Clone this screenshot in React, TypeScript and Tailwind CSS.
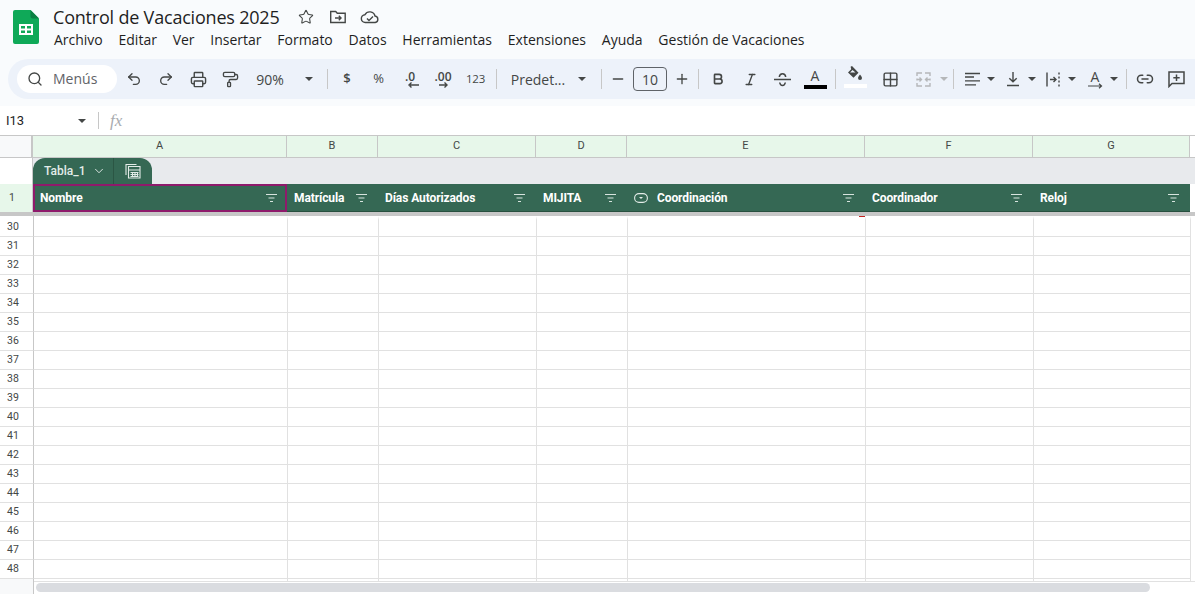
import { Printer, PaintRoller, Undo2, Redo2, Search, Star, Link2, Plus, Minus, ChevronDown, Bold, Italic, Grid2x2 } from 'lucide-react';
import type { ReactNode } from 'react';

const menus = ['Archivo', 'Editar', 'Ver', 'Insertar', 'Formato', 'Datos', 'Herramientas', 'Extensiones', 'Ayuda', 'Gestión de Vacaciones'];
const rows = Array.from({ length: 20 }, (_, i) => 30 + i);

const columns = [
  { key: 'A', title: 'Nombre', width: 'w-[254px]' },
  { key: 'B', title: 'Matrícula', width: 'w-[91px]' },
  { key: 'C', title: 'Días Autorizados', width: 'w-[158px]' },
  { key: 'D', title: 'MIJITA', width: 'w-[91px]' },
  { key: 'E', title: 'Coordinación', width: 'w-[238px]' },
  { key: 'F', title: 'Coordinador', width: 'w-[168px]' },
  { key: 'G', title: 'Reloj', width: 'w-[157px]' },
];

const Btn = ({ w, children }: { w: string; children: ReactNode }) => (
  <div className={`${w} h-full flex-none flex items-center justify-center text-[#444746]`}>{children}</div>
);

const Sep = () => (
  <div className="w-[8px] h-full flex-none flex items-center justify-center">
    <div className="w-px h-[20px] bg-[#c7c7c7]" />
  </div>
);

const Caret = ({ w = 'w-[10px]', light = false }: { w?: string; light?: boolean }) => (
  <div className={`${w} h-full flex-none flex items-center justify-center`}>
    <div className={`w-0 h-0 border-x-[4px] border-x-transparent border-t-[4px] ${light ? 'border-t-[#b5b7b9]' : 'border-t-[#444746]'}`} />
  </div>
);

const FilterIcon = () => (
  <svg width="11" height="8" viewBox="0 0 11 8" className="flex-none">
    <path d="M0 .5h11M2.500 4h6M4 7.500h3" stroke="#d7e4de" strokeWidth="1" fill="none" />
  </svg>
);

const SheetsLogo = () => (
  <svg width="26" height="34" viewBox="0 0 26 34" className="flex-none">
    <path d="M2 0h15.500L26 8.500V32a2 2 0 0 1-2 2H2a2 2 0 0 1-2-2V2a2 2 0 0 1 2-2z" fill="#0fa958" />
    <path d="M17.500 0 26 8.500h-6.500a2 2 0 0 1-2-2z" fill="#0b7f43" />
    <path d="M6 14h14v11H6z" fill="#fff" />
    <path d="M8 16h4v2.500H8zM14 16h4v2.500h-4zM8 20.500h4V23H8zM14 20.500h4V23h-4z" fill="#0fa958" />
  </svg>
);

const Header = () => (
  <div className="h-[59px] flex pl-[13px] pt-[10px] bg-[#f9fbfd]">
    <SheetsLogo />
    <div className="ml-[14px] -mt-[5px]">
      <div className="flex items-center h-[24px]">
        <span className="text-[18px] leading-[24px] text-[#1f1f1f] w-[245px] font-['Open_Sans',sans-serif] tracking-[-0.2px]">Control de Vacaciones 2025</span>
        <Star size={16} strokeWidth={1.6} className="text-[#444746]" />
        <svg width="18" height="16" viewBox="0 0 18 16" fill="none" stroke="#444746" strokeWidth="1.4" className="ml-[15px]">
          <path d="M1.700 2.500h5l1.600 1.800h7.900v9.200H1.700z" />
          <path d="M6 9h6M9.800 6.800 12 9l-2.200 2.200" />
        </svg>
        <svg width="20" height="16" viewBox="0 0 20 16" fill="none" stroke="#444746" strokeWidth="1.4" className="ml-[13px]">
          <path d="M5.500 13.500a3.900 3.900 0 0 1-.5-7.800 5.400 5.400 0 0 1 10 1.300 3.300 3.300 0 0 1 .2 6.500z" />
          <path d="m7 9.500 2 2 4-4" />
        </svg>
      </div>
      <div className="flex gap-[15.8px] mt-[1px] ml-[1px] text-[14px] leading-[19px] text-[#1f1f1f] font-['Open_Sans',sans-serif] tracking-[-0.01px]">
        {menus.map((m) => (
          <span key={m} className="whitespace-nowrap">{m}</span>
        ))}
      </div>
    </div>
  </div>
);

const Toolbar = () => (
  <div className="ml-[8px] h-[40px] flex items-center rounded-l-[20px] bg-[#edf2fa] pl-[9px] whitespace-nowrap font-['Open_Sans',sans-serif] text-[#444746]">
    <div className="w-[100px] h-[28px] flex-none rounded-full bg-white flex items-center pl-[10px] text-[14px]">
      <Search size={16} strokeWidth={2} />
      <span className="ml-[10px] pb-[2px] text-[#5f6368]">Menús</span>
    </div>
    <div className="w-[1px] flex-none" />
    <Btn w="w-[32px]"><Undo2 size={16} strokeWidth={2} /></Btn>
    <Btn w="w-[32px]"><Redo2 size={16} strokeWidth={2} /></Btn>
    <Btn w="w-[32px]"><Printer size={17} strokeWidth={2} /></Btn>
    <Btn w="w-[32px]"><PaintRoller size={17} strokeWidth={1.9} /></Btn>
    <Btn w="w-[48px]"><span className="text-[14px]">90%</span></Btn>
    <Caret w="w-[29px]" />
    <Sep />
    <Btn w="w-[32px]"><span className="text-[13px] font-semibold">$</span></Btn>
    <Btn w="w-[31px]"><span className="text-[13px]">%</span></Btn>
    <Btn w="w-[32px]">
      <div className="flex flex-col items-center">
        <span className="text-[12px] leading-[11px] font-semibold">.0</span>
        <svg width="12" height="6" viewBox="0 0 12 6" className="ml-[6px]"><path d="M12 3H3M4.500.5 2 3l2.500 2.500" stroke="#444746" strokeWidth="1.4" fill="none" /></svg>
      </div>
    </Btn>
    <div className="w-[1px] flex-none" />
    <Btn w="w-[32px]">
      <div className="flex flex-col items-center">
        <span className="text-[12px] leading-[11px] font-semibold">.00</span>
        <svg width="12" height="6" viewBox="0 0 12 6"><path d="M2 3h8M7.500.5 10 3 7.500 5.500" stroke="#444746" strokeWidth="1.4" fill="none" /></svg>
      </div>
    </Btn>
    <Btn w="w-[33px]"><span className="text-[11.5px] tracking-[-0.3px]">123</span></Btn>
    <Sep />
    <div className="w-[2px] flex-none" />
    <Btn w="w-[72px]"><span className="text-[14px]">Predet...</span></Btn>
    <Caret w="w-[16px]" />
    <div className="w-[7px] flex-none" />
    <Sep />
    <Btn w="w-[26px]"><Minus size={16} strokeWidth={2} /></Btn>
    <div className="w-[34px] h-[24px] ml-[2px] flex-none rounded-[4px] border border-[#5f6368] flex items-center justify-center text-[14px]">10</div>
    <div className="w-[2px] flex-none" />
    <Btn w="w-[25px]"><Plus size={16} strokeWidth={2} /></Btn>
    <Sep />
    <Btn w="w-[32px]"><Bold size={14} strokeWidth={2.8} /></Btn>
    <Btn w="w-[32px]"><Italic size={15} strokeWidth={2.2} /></Btn>
    <Btn w="w-[32px]">
      <svg width="17" height="15" viewBox="0 0 17 15" fill="none" stroke="#444746" strokeWidth="1.5">
        <path d="M0 7.500h17M5.300 5c.2-2 1.500-3.300 3.200-3.300S11.500 3 11.700 5M5.700 10.500c.3 1.800 1.300 3 2.800 3s2.500-1.200 2.800-3" />
      </svg>
    </Btn>
    <div className="w-[32px] h-full flex-none flex flex-col items-center pt-[8px] ml-[1px]">
      <span className="text-[14px] leading-[18px] font-medium">A</span>
      <div className="w-[23px] h-[4px] bg-black" />
    </div>
    <Sep />
    <div className="w-[32px] h-full flex-none flex flex-col items-center pt-[7px]">
      <svg width="16" height="18" viewBox="0 0 16 18" fill="#444746">
        <path d="M3.600.8 5 0l6.500 6.800-5 5L1 6.500l3.200-3.300zM5.500 4 3 6.500h5.500z" fillRule="evenodd" />
        <path d="M13 8.500s2 2.300 2 3.600a2 2 0 0 1-4 0c0-1.300 2-3.600 2-3.600z" />
      </svg>
      <div className="w-[23px] h-[4px] bg-white" />
    </div>
    <div className="w-[3px] flex-none" />
    <Btn w="w-[32px]"><Grid2x2 size={17} strokeWidth={2} /></Btn>
    <div className="w-[1px] flex-none" />
    <Btn w="w-[32px]">
      <svg width="15" height="15" viewBox="0 0 15 15" fill="none" stroke="#b5b7b9" strokeWidth="1.4">
        <path d="M1 4V1h5M14 4V1H9M1 11v3h5M14 11v3H9M1 6.500v2M14 6.500v2M5 7.500H1.500M10 7.500h3.500M3.500 5.500l2 2-2 2M11.500 5.500l-2 2 2 2" />
      </svg>
    </Btn>
    <Caret light />
    <Sep />
    <Btn w="w-[30px]">
      <svg width="15" height="15" viewBox="0 0 15 15" stroke="#444746" strokeWidth="1.3"><path d="M0 1.500h15M0 5h9M0 8.800h15M0 12.800h11" /></svg>
    </Btn>
    <Caret w="w-[8px]" />
    <div className="w-[4px] flex-none" />
    <Btn w="w-[28px]">
      <svg width="14" height="15" viewBox="0 0 14 15" fill="none" stroke="#444746" strokeWidth="1.4"><path d="M7 0v9.500M3.300 6.200 7 9.800l3.700-3.600M1 13.500h12" /></svg>
    </Btn>
    <Caret />
    <div className="w-[2px] flex-none" />
    <Btn w="w-[28px]">
      <svg width="14" height="15" viewBox="0 0 14 15" fill="none" stroke="#444746" strokeWidth="1.4">
        <path d="M1 .5v14M4 7.500h6M7.500 5l2.500 2.500L7.500 10" />
        <path d="M13 .5v14" strokeDasharray="2 2" />
      </svg>
    </Btn>
    <Caret />
    <div className="w-[4px] flex-none" />
    <Btn w="w-[28px]">
      <div className="flex flex-col items-center">
        <span className="text-[14px] leading-[13px] font-medium">A</span>
        <svg width="15" height="6" viewBox="0 0 15 6" fill="none" stroke="#444746" strokeWidth="1.2"><path d="M0 3h13.500M11 .8 13.500 3 11 5.200" /></svg>
      </div>
    </Btn>
    <Caret />
    <div className="w-[3px] flex-none" />
    <Sep />
    <Btn w="w-[30px]"><Link2 size={18} strokeWidth={2} /></Btn>
    <Btn w="w-[32px]">
      <svg width="17" height="17" viewBox="0 0 17 17" fill="none" stroke="#444746" strokeWidth="1.5">
        <path d="M1 1h15v11.500H4L1 15.500zM8.500 3.500v6.500M5.300 6.800h6.400" />
      </svg>
    </Btn>
  </div>
);

const FormulaBar = () => (
  <div className="h-[29px] mt-[7px] flex items-center bg-white font-['Roboto',sans-serif]">
    <span className="w-[72px] pl-[6px] pt-[1px] text-[13px] text-[#1f1f1f] flex-none">I13</span>
    <Caret w="w-[20px]" />
    <div className="w-px h-[17px] bg-[#c7c7c7] ml-[6px]" />
    <span className="ml-[11px] pt-[1px] text-[17px] italic text-[#a8abaf] font-['Liberation_Serif',serif]">fx</span>
  </div>
);

const ColumnHeaders = () => (
  <div className="h-[23px] flex border-y border-[#c7c7c7] bg-[#e7f7ea]">
    <div className="w-[33px] flex-none bg-[#f8f9fa] border-r-[2px] border-[#c7c7c7]" />
    {columns.map((c) => (
      <div key={c.key} className={`${c.width} flex-none flex items-center justify-center border-r border-[#c7c7c7] text-[11px] text-[#444746]`}>
        {c.key}
      </div>
    ))}
    <div className="flex-1 bg-white" />
  </div>
);

const TableTabRow = () => (
  <div className="h-[26px] flex">
    <div className="w-[33px] flex-none bg-white border-r border-[#c7c7c7]" />
    <div className="flex-1 bg-[#e8eaed] flex items-end">
      <div className="w-[119px] h-[26px] flex rounded-t-[12px] bg-[#356854] text-[#e3ece8]">
        <div className="w-[81px] flex items-center pl-[11px] gap-[7px] border-r border-[#2b5644] text-[12px] font-medium">
          <span>Tabla_1</span>
          <ChevronDown size={14} strokeWidth={1.6} />
        </div>
        <div className="flex-1 flex items-center justify-center">
          <svg width="16" height="16" viewBox="0 0 16 16" fill="none" stroke="#e3ece8" strokeWidth="1.100">
            <path d="M1 12V1.500h10.500" />
            <path d="M3.500 3.500H15V15H3.500zM3.500 7h11.500M7.500 9.500v3.500M10 9.500v3.500M12.500 9.500v3.500M5.500 9.500h8M5.500 11.500h8M5.500 13.500h8" />
          </svg>
        </div>
      </div>
    </div>
  </div>
);

const TableHeader = () => (
  <div className="h-[28px] flex bg-white">
    <div className="w-[33px] flex-none flex items-center justify-center pr-[8px] border-r border-[#c7c7c7] bg-[#e7f7ea] text-[10.500px] text-[#444746]">1</div>
    {columns.map((c, i) => (
      <div
        key={c.key}
        className={`${c.width} flex-none flex items-center bg-[#356854] text-white text-[12px] font-bold ${i === 0 ? 'border-2 border-[#8e1a6b] pl-[5px] pr-[8px]' : 'border-b border-b-[#28503f] pl-[7px] pr-[11px]'}`}
      >
        {c.key === 'E' && (
          <svg width="14" height="10" viewBox="0 0 14 10" fill="none" className="mr-[9px] flex-none">
            <rect x=".6" y=".6" width="12.800" height="8.800" rx="4.400" stroke="#e3ece8" strokeWidth="1.100" />
            <path d="M5 4h4L7 6z" fill="#e3ece8" />
          </svg>
        )}
        <span className="flex-1 whitespace-nowrap tracking-[-0.1px]">{c.title}</span>
        <FilterIcon />
      </div>
    ))}
  </div>
);

const Grid = () => (
  <div className="relative h-[365px] overflow-hidden">
    <div className="absolute z-10 left-[859px] top-0 w-[6px] h-px bg-[#c5221f]" />
    {rows.map((r) => (
      <div key={r} className={`flex ${r === 30 ? 'h-[21px]' : 'h-[19px]'}`}>
        <div className={`w-[34px] flex-none flex items-center justify-center pr-[7px] border-r border-b border-r-[#c7c7c7] border-b-[#e1e1e1] text-[10.500px] text-[#444746] ${r === 49 ? 'bg-[#f8f9fa]' : ''} ${r === 30 ? 'pt-[2px]' : ''}`}>
          {r < 49 ? r : ''}
        </div>
        {columns.map((c) => (
          <div key={c.key} className={`${c.width} flex-none border-b border-r border-[#e1e1e1] ${r === 30 ? 'border-t-[4px] border-t-white' : ''}`} />
        ))}
      </div>
    ))}
  </div>
);

const Footer = () => (
  <div className="flex h-[13px]">
    <div className="w-[34px] flex-none bg-[#f8f9fa] border-r border-[#c7c7c7]" />
    <div className="flex-1 bg-white pl-[2px] pt-[1px] border-t border-[#e1e1e1]">
      <div className="w-[1114px] h-[9px] rounded-full bg-[#dadce0]" />
    </div>
  </div>
);

const App = () => (
  <div className="w-[1195px] h-[594px] overflow-hidden bg-[#f9fbfd] font-['Roboto',sans-serif]">
    <Header />
    <Toolbar />
    <FormulaBar />
    <ColumnHeaders />
    <TableTabRow />
    <TableHeader />
    <div className="h-[4px] bg-[#c7c7c7]" />
    <div className="bg-white">
      <Grid />
      <Footer />
    </div>
  </div>
);

export default App;
